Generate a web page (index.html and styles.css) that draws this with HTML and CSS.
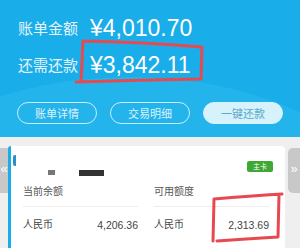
FILE: index.html
```html
<!DOCTYPE html>
<html lang="zh-CN">
<head>
    <meta charset="UTF-8" />
    <meta name="viewport" content="width=device-width, initial-scale=1.0"/>
    <title>账单</title>
    <link rel="stylesheet" href="styles.css">
</head>
<body>
    <div id="app">
        <!-- Bill summary -->
        <div class="bill-header">
            <div class="bill-row">
                <span class="bill-label">账单金额</span>
                <span class="bill-amount">¥4,010.70</span>
            </div>
            <div class="bill-row">
                <span class="bill-label">还需还款</span>
                <span class="bill-amount">¥3,842.11</span>
            </div>
            <div class="bill-actions">
                <button class="pill">账单详情</button>
                <button class="pill">交易明细</button>
                <button class="pill pill-solid">一键还款</button>
            </div>
        </div>

        <!-- Card carousel -->
        <div class="carousel">
            <div class="nav-tab nav-prev">«</div>
            <div class="card">
                <div class="card-top">
                    <span class="card-mark"></span>
                    <span class="mask mask-short"></span>
                    <span class="mask mask-long"></span>
                    <span class="badge">主卡</span>
                </div>
                <div class="card-cols">
                    <div class="col">
                        <div class="col-title">当前余额</div>
                        <div class="col-row">
                            <span>人民币</span>
                            <span class="num">4,206.36</span>
                        </div>
                    </div>
                    <div class="col">
                        <div class="col-title">可用额度</div>
                        <div class="col-row">
                            <span>人民币</span>
                            <span class="num">2,313.69</span>
                        </div>
                    </div>
                </div>
            </div>
            <div class="nav-tab nav-next">»</div>
        </div>

        <!-- hand-drawn highlight marks -->
        <svg class="marks" width="300" height="248" viewBox="0 0 300 248">
            <path d="M83 41 Q140 42 202 47 L201 79 Q140 80 76 82 M83 41 L81 82" />
            <path d="M214 199 Q250 196 282 194 M279 195 L278 237 Q245 239 217 241 M214 199 L213 241" />
        </svg>
    </div>
</body>
</html>
```

FILE: styles.css
```css
body {
    margin: 0;
    padding: 0;
    font-family: "Liberation Sans", "Noto Sans CJK SC", sans-serif;
    background: #efefef;
    overflow: hidden;
}

#app {
    position: relative;
    width: 300px;
    height: 248px;
    overflow: hidden;
}

.bill-header {
    position: relative;
    height: 137px;
    box-sizing: border-box;
    padding: 10px 0 0 18px;
    background: #19ade9;
    overflow: hidden;
}

/* soft lighter arc behind the buttons */
.bill-header::before {
    content: "";
    position: absolute;
    left: -170px;
    top: 77px;
    width: 600px;
    height: 400px;
    border-radius: 50%;
    background: #24b4ec;
}

.bill-row {
    position: relative;
    display: flex;
    align-items: center;
    height: 37px;
}

.bill-label {
    width: 72px;
    font-size: 15px;
    line-height: 1;
    color: #e3f4fc;
}

.bill-amount {
    font-size: 23px;
    line-height: 1;
    color: #fff;
}

.bill-actions {
    position: relative;
    display: flex;
    gap: 13px;
    margin: 18px 0 0 -1px;
}

.pill {
    width: 80px;
    height: 22px;
    padding: 0;
    border: 1px solid rgba(255, 255, 255, 0.75);
    border-radius: 11px;
    background: transparent;
    font-family: inherit;
    font-size: 11px;
    color: rgba(255, 255, 255, 0.85);
}

.pill-solid {
    background: #d6f2fc;
    border-color: #d6f2fc;
    color: #5ba8c9;
}

.carousel {
    display: flex;
    align-items: flex-start;
    padding-top: 9px;
}

.nav-tab {
    height: 45px;
    margin-top: 2px;
    background: #c8c8c8;
    color: #fff;
    font-size: 13px;
    line-height: 42px;
    text-align: center;
    overflow: hidden;
}

.nav-prev {
    width: 8px;
}

.nav-next {
    width: 12px;
    margin-left: 3px;
    border-radius: 5px 0 0 5px;
}

.card {
    width: 274px;
    height: 110px;
    background: #fff;
    border-left: 3px solid #1aaee8;
    border-radius: 3px 4px 0 0;
}

.card-top {
    display: flex;
    align-items: flex-start;
    height: 36px;
    padding: 9px 12px 0 2px;
    box-sizing: border-box;
}

.card-mark {
    width: 3px;
    height: 11px;
    background: #2d8fc7;
    border-radius: 2px 0 0 2px;
}

.mask {
    margin-top: 15px;
    height: 5px;
}

.mask-short {
    width: 7px;
    margin-left: 32px;
    background: #777;
}

.mask-long {
    width: 25px;
    height: 6px;
    margin-left: 24px;
    background: #333;
}

.badge {
    margin: 6px 0 0 auto;
    width: 26px;
    height: 11px;
    border-radius: 2px;
    background: #3fa835;
    color: #fff;
    font-size: 7px;
    line-height: 11px;
    text-align: center;
}

.card-cols {
    display: grid;
    grid-template-columns: 115px 115px;
    gap: 16px;
    padding: 0 16px 0 12px;
}

.col-title {
    height: 24px;
    line-height: 20px;
    font-size: 10px;
    color: #555;
    border-bottom: 1px solid #eee;
}

.col-row {
    display: flex;
    justify-content: space-between;
    line-height: 36px;
    font-size: 10px;
    color: #444;
}

.num {
    font-size: 10.5px;
}

.marks {
    position: absolute;
    left: 0;
    top: 0;
    pointer-events: none;
}

.marks path {
    fill: none;
    stroke: #e64a50;
    stroke-width: 3;
    stroke-linecap: round;
    stroke-linejoin: round;
}
```
